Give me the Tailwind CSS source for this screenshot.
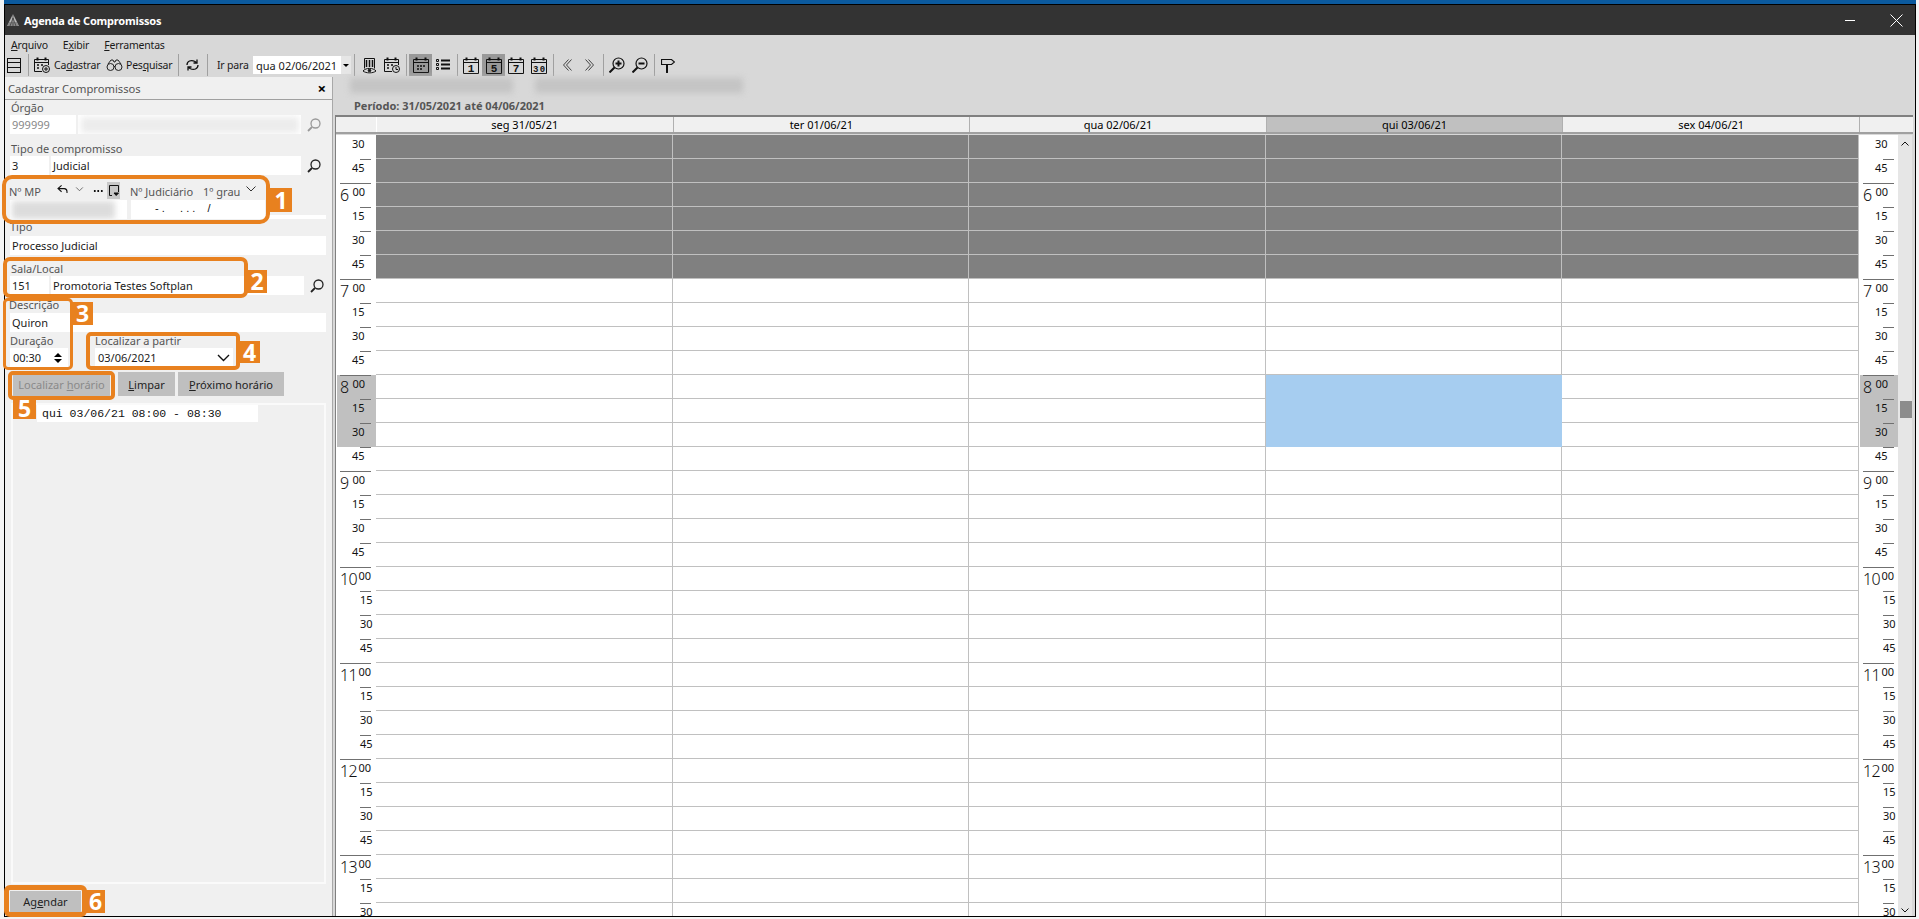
<!doctype html>
<html lang="pt-BR">
<head>
<meta charset="utf-8">
<title>Agenda de Compromissos</title>
<script src="https://cdn.jsdelivr.net/npm/@tailwindcss/browser@4"></script>
</head>
<body class="relative h-[919px] w-[1919px] overflow-hidden bg-[#f4f4f4] font-['Noto_Sans',sans-serif] text-[11px] leading-[15px] text-[#1a1a1a]">
<div class="ml-[4px] mr-[3px] h-[917px] flex flex-col">
  <div class="h-[4px] bg-[#0b5a9e] shrink-0"></div>
  <div class="flex-1 min-h-0 flex flex-col border-x border-b border-black">
    <!-- title -->
    <div class="h-[31px] shrink-0 bg-[#333333] border-t border-black flex items-center text-white">
      <svg class="ml-[1px] w-[14px] h-[14px]" viewBox="0 0 14 14"><path d="M7 1 L13 13 H1Z" fill="#b8b8b8"/><path d="M7 1V13M4 13 7 5M10 13 7 5M2.500 10H11.500M1.500 12H12.500" stroke="#333" stroke-width=".7"/></svg>
      <span class="ml-[4px] text-[11px] tracking-[-0.2px] font-bold">Agenda de Compromissos</span>
      <div class="ml-auto flex items-center">
        <div class="w-[10px] h-[1px] bg-white mr-[35px]"></div>
        <svg class="w-[13px] h-[13px] mr-[12px]" viewBox="0 0 13 13" fill="none" stroke="#fff"><path d="M.5.500 12.500 12.500M12.500.500 .5 12.500"/></svg>
      </div>
    </div>
    <!-- menu -->
    <div class="h-[18px] shrink-0 bg-[#d8d8d8] flex items-center pl-[6px] pt-[3px] text-[10.5px] tracking-[-0.2px]">
      <span><u>A</u>rquivo</span><span class="ml-[15px]">E<u>x</u>ibir</span><span class="ml-[15px]"><u>F</u>erramentas</span>
    </div>
    <!-- toolbar -->
    <div class="h-[24px] shrink-0 bg-[#d8d8d8] flex items-center text-[10.5px] tracking-[-0.2px]">
      <svg class="ml-[2px] w-[14px] h-[15px]" viewBox="0 0 14 15" fill="none" stroke="#111"><rect x=".5" y=".5" width="13" height="14"/><path d="M.5 4.500H13.500M.5 9.500H13.500"/></svg>
      <div class="ml-[7px] w-[1px] h-[22px] bg-[#a0a0a0]"></div>
      <svg class="ml-[5px] w-[16px] h-[16px]" viewBox="0 0 16 16" fill="none" stroke="#111"><path d="M.5 2.500H14.500V8M8 14.500H.5V2.500M.5 5.500H14.500"/><path d="M3.500.5V3.500M11.500.5V3.500" stroke-width="2"/><path d="M3 8H5M3 11H5M7 8H9" stroke-width="1.500"/><circle cx="12" cy="12" r="3.500"/><path d="M12 10V14M10 12H14"/></svg>
      <span class="ml-[4px] w-[45px] whitespace-nowrap">Ca<u>d</u>astrar</span>
      <svg class="ml-[7px] w-[17px] h-[14px]" viewBox="0 0 17 14" fill="none" stroke="#222"><circle cx="4.500" cy="9" r="3.500"/><circle cx="12.500" cy="9" r="3.500"/><path d="M8 8.500 9 8.500M2 6 5 2H7L8 4H9L10 2H12L15 6"/></svg>
      <span class="ml-[3px] w-[46px] whitespace-nowrap">Pes<u>q</u>uisar</span>
      <div class="ml-[6px] w-[1px] h-[22px] bg-[#a0a0a0]"></div>
      <svg class="ml-[7px] w-[13px] h-[14px]" viewBox="0 0 13 14" fill="none" stroke="#111" stroke-width="1.300"><path d="M1 7C1 3 5 1.500 9 3.500L11 5M11 1.500V5H7.500M12 7C12 11 8 12.500 4 10.500L2 9M2 12.500V9H5.500"/></svg>
      <div class="ml-[8px] w-[1px] h-[22px] bg-[#a0a0a0]"></div>
      <span class="ml-[9px] w-[30px] whitespace-nowrap">Ir para</span>
      <div class="ml-[6px] w-[98px] h-[18px] bg-white flex items-center justify-between pl-[3px] text-[11px] tracking-normal"><span>qua 02/06/2021</span><span class="w-[10px] h-full bg-[#e6e6e6] flex items-center justify-center"><span class="border-x-[3px] border-t-[3px] border-x-transparent border-t-black"></span></span></div>
      <div class="ml-[3px] w-[1px] h-[22px] bg-[#a0a0a0]"></div>
      <!-- doc eye -->
      <svg class="ml-[7px] w-[15px] h-[17px]" viewBox="0 0 15 17" fill="none" stroke="#111"><path d="M2.500 11.500V1.500H12.500V11.500"/><path d="M4.500 3V10M7.500 3V10M10.500 3V10" stroke-width="1.500"/><path d="M1 14C4 10.500 11 10.500 14 14C11 16.500 4 16.500 1 14Z"/><circle cx="7.500" cy="13.500" r="1.300" fill="#111"/></svg>
      <!-- cal clock -->
      <svg class="ml-[7px] w-[16px] h-[16px]" viewBox="0 0 16 16" fill="none" stroke="#111"><path d="M.5 2.500H14.500V8M8 14.500H.5V2.500M.5 5.500H14.500"/><path d="M3.500.5V3.500M11.500.5V3.500" stroke-width="2"/><path d="M3 8H5M3 11H5M7 8H9" stroke-width="1.500"/><circle cx="12" cy="12" r="3.500"/><path d="M12 10V12.500H14"/></svg>
      <div class="ml-[6px] w-[1px] h-[22px] bg-[#a0a0a0]"></div>
      <div class="ml-[2px] w-[23px] h-[22px] bg-[#999999] flex items-center justify-center">
        <svg class="w-[16px] h-[16px]" viewBox="0 0 16 16" fill="none" stroke="#111"><path d="M.5 2.500H15.500V15.500H.5Z M.5 5.500H15.500"/><path d="M3.500.5V3.500M12.500.5V3.500" stroke-width="2"/><path d="M4 9H6M7 9H9M10 9H12M4 12H6M7 12H9" stroke-width="1.500"/></svg>
      </div>
      <svg class="ml-[4px] w-[14px] h-[12px]" viewBox="0 0 14 12" fill="none" stroke="#111"><path d="M.5 .5H2.500V2.500H.5ZM.5 4.500H2.500V6.500H.5ZM.5 8.500H2.500V10.500H.5Z"/><path d="M5 1.500H14M5 5.500H14M5 9.500H14" stroke-width="2"/></svg>
      <div class="ml-[7px] w-[1px] h-[22px] bg-[#a0a0a0]"></div>
      <svg class="ml-[5px] w-[16px] h-[17px] overflow-visible" viewBox="0 0 16 17" fill="none" stroke="#111"><path d="M.5 2.500H15.500V16.500H.5Z M.5 5.500H15.500"/><path d="M3.500.5V3.500M12.500.5V3.500" stroke-width="2"/><text x="8" y="15" text-anchor="middle" font-family="Liberation Mono" font-weight="700" font-size="11" fill="#111" stroke="none">1</text></svg>
      <div class="ml-[3px] w-[23px] h-[22px] bg-[#999999] flex items-center justify-center">
        <svg class="w-[16px] h-[17px] overflow-visible" viewBox="0 0 16 17" fill="none" stroke="#111"><path d="M.5 2.500H15.500V16.500H.5Z M.5 5.500H15.500"/><path d="M3.500.5V3.500M12.500.5V3.500" stroke-width="2"/><text x="8" y="15" text-anchor="middle" font-family="Liberation Mono" font-weight="700" font-size="11" fill="#111" stroke="none">5</text></svg>
      </div>
      <svg class="ml-[3px] w-[16px] h-[17px] overflow-visible" viewBox="0 0 16 17" fill="none" stroke="#111"><path d="M.5 2.500H15.500V16.500H.5Z M.5 5.500H15.500"/><path d="M3.500.5V3.500M12.500.5V3.500" stroke-width="2"/><text x="8" y="15" text-anchor="middle" font-family="Liberation Mono" font-weight="700" font-size="11" fill="#111" stroke="none">7</text></svg>
      <svg class="ml-[7px] w-[16px] h-[17px] overflow-visible" viewBox="0 0 16 17" fill="none" stroke="#111"><path d="M.5 2.500H15.500V16.500H.5Z M.5 5.500H15.500"/><path d="M3.500.5V3.500M12.500.5V3.500" stroke-width="2"/><text x="8" y="15" text-anchor="middle" font-family="Liberation Mono" font-weight="700" font-size="9" fill="#111" stroke="none" textLength="12">30</text></svg>
      <div class="ml-[6px] w-[1px] h-[22px] bg-[#a0a0a0]"></div>
      <svg class="ml-[9px] w-[9px] h-[12px]" viewBox="0 0 9 12" fill="none" stroke="#444"><path d="M5.500.5 .5 6 5.500 11.500M8.500.5 3.500 6 8.500 11.500"/></svg>
      <svg class="ml-[13px] w-[9px] h-[12px]" viewBox="0 0 9 12" fill="none" stroke="#444"><path d="M.5.5 5.500 6 .5 11.500M3.500.5 8.500 6 3.500 11.500"/></svg>
      <div class="ml-[9px] w-[1px] h-[22px] bg-[#a0a0a0]"></div>
      <svg class="ml-[5px] w-[16px] h-[16px]" viewBox="0 0 16 16" fill="none" stroke="#111"><circle cx="9.500" cy="6.500" r="5.500" stroke-width="1.200"/><path d="M5.500 10.500 .5 15.500" stroke-width="2"/><path d="M9.500 3.500V9.500M6.500 6.500H12.500" stroke-width="2"/></svg>
      <svg class="ml-[7px] w-[16px] h-[16px]" viewBox="0 0 16 16" fill="none" stroke="#111"><circle cx="9.500" cy="6.500" r="5.500" stroke-width="1.200"/><path d="M5.500 10.500 .5 15.500" stroke-width="2"/><path d="M6.500 6.500H12.500" stroke-width="2"/></svg>
      <div class="ml-[6px] w-[1px] h-[22px] bg-[#a0a0a0]"></div>
      <svg class="ml-[6px] w-[14px] h-[15px]" viewBox="0 0 14 15" fill="none" stroke="#111"><path d="M.5 1.500H10.500L13.500 4 10.500 6.500H.5Z" stroke-width="1.200"/><path d="M6 6.500V15" stroke-width="2"/></svg>
    </div>
    <!-- main -->
    <div class="flex-1 min-h-0 flex bg-[#d8d8d8]">
      <!-- left panel -->
      <aside class="w-[328px] shrink-0 bg-[#f0f0f0] border-r border-[#a8a8a8] flex flex-col text-[#555]">
        <div class="h-[23px] shrink-0 border-b border-[#a0a0a0] flex items-center justify-between px-[3px] pr-[6px] text-[11.2px]"><span>Cadastrar Compromissos</span><span class="font-bold text-black text-[15px]">×</span></div>
        <div class="flex-1 flex flex-col pl-[5px] pr-[6px] text-[11px]">
          <div class="h-[15px] pl-[1px]">Órgão</div>
          <div class="flex h-[19px] items-center">
            <div class="w-[66px] h-full bg-white text-[#888] pl-[2px] flex items-center">999999</div>
            <div class="relative ml-[2px] w-[223px] h-full bg-white overflow-hidden"><div class="absolute left-[3px] right-[2px] top-[2px] bottom-[1px] bg-[#ececec] blur-[3px]"></div></div>
            <svg class="ml-[6px] w-[14px] h-[14px]" viewBox="0 0 14 14" fill="none" stroke="#999" stroke-width="1.300"><circle cx="8.500" cy="5.500" r="4.500"/><path d="M5 9 1 13" stroke-width="1.800"/></svg>
          </div>
          <div class="h-[22px] pl-[1px] pt-[7px] whitespace-nowrap">Tipo de compromisso</div>
          <div class="flex h-[19px] items-center">
            <div class="w-[39px] h-full bg-white text-[#1a1a1a] pl-[2px] flex items-center">3</div>
            <div class="ml-[2px] w-[250px] h-full bg-white text-[#1a1a1a] pl-[2px] flex items-center">Judicial</div>
            <svg class="ml-[6px] w-[14px] h-[14px]" viewBox="0 0 14 14" fill="none" stroke="#222" stroke-width="1.300"><circle cx="8.500" cy="5.500" r="4.500"/><path d="M5 9 1 13" stroke-width="1.800"/></svg>
          </div>
          <div class="h-[25px] flex items-end pb-[1px] relative">
            <span class="-ml-[1px]">Nº MP</span>
            <svg class="absolute left-[47px] top-[10px] w-[11px] h-[9px]" viewBox="0 0 12 10" fill="none" stroke="#111" stroke-width="1.200"><path d="M5 .5 1 4 5 7.500M1 4H8C10 4 11 5.500 11 7.500V9"/></svg>
            <svg class="absolute left-[65px] top-[12px] w-[9px] h-[5px]" viewBox="0 0 9 6" fill="none" stroke="#555"><path d="M.5.5 4.500 4.500 8.500.5"/></svg>
            <span class="absolute left-[83px] top-[15px] w-[10px] h-[2px] bg-[radial-gradient(circle,#111_1px,transparent_1px)] bg-[length:3.500px_2px]"></span>
            <span class="absolute left-[97px] top-[7px] w-[13px] h-[17px] bg-[#c8c8c8] flex items-center justify-center"><svg class="w-[10px] h-[11px]" viewBox="0 0 10 11" fill="none" stroke="#111"><path d="M3 10.500H.5V.5H9.500V7"/><path d="M5 8H9.500L7.200 10.500Z" fill="#111"/></svg></span>
            <span class="absolute left-[120px] bottom-[1px] whitespace-nowrap">Nº Judiciário</span>
            <span class="absolute left-[193px] bottom-[1px] whitespace-nowrap">1º grau</span>
            <svg class="absolute left-[236px] top-[11px] w-[10px] h-[6px]" viewBox="0 0 10 6" fill="none" stroke="#333"><path d="M.5.5 5 5 9.500.5"/></svg>
          </div>
          <div class="flex h-[19px]">
            <div class="relative w-[117px] h-full bg-white overflow-hidden"><div class="absolute left-[2px] right-[12px] top-[1px] bottom-0 bg-[#dcdcdc] blur-[3px]"></div></div>
            <div class="ml-[4px] w-[195px] h-full bg-[#f0f0f0] flex flex-col"><div class="w-[134px] h-[15px] bg-white text-[#111] pl-[24px] pt-[1px] leading-[14px] whitespace-pre font-['Liberation_Sans',sans-serif] text-[11px]">- .     . . .    /</div><div class="h-[4px] bg-white"></div></div>
          </div>
          <div class="h-[17px]">Tipo</div>
          <div class="h-[19px] w-[316px] bg-white text-[#1a1a1a] pl-[2px] flex items-center">Processo Judicial</div>
          <div class="h-[21px] pl-[1px] pt-[6px]">Sala/Local</div>
          <div class="flex h-[19px] items-center">
            <div class="w-[39px] h-full bg-white text-[#1a1a1a] pl-[2px] flex items-center">151</div>
            <div class="ml-[2px] w-[253px] h-full bg-white text-[#1a1a1a] pl-[2px] flex items-center">Promotoria Testes Softplan</div>
            <svg class="ml-[6px] w-[14px] h-[14px]" viewBox="0 0 14 14" fill="none" stroke="#222" stroke-width="1.300"><circle cx="8.500" cy="5.500" r="4.500"/><path d="M5 9 1 13" stroke-width="1.800"/></svg>
          </div>
          <div class="h-[18px] -ml-[1px] pt-[2px]">Descrição</div>
          <div class="h-[19px] w-[316px] bg-white text-[#1a1a1a] pl-[2px] flex items-center">Quiron</div>
          <div class="h-[35px] flex">
            <div class="w-[58px] flex flex-col pt-[1px]">
              <span class="h-[15px]">Duração</span>
              <div class="h-[19px] bg-white text-[#1a1a1a] pl-[3px] flex items-center justify-between pr-[6px]">00:30<span class="flex flex-col gap-[2px]"><span class="border-x-[4px] border-b-[4px] border-x-transparent border-b-black"></span><span class="border-x-[4px] border-t-[4px] border-x-transparent border-t-black"></span></span></div>
            </div>
            <div class="ml-[27px] w-[138px] flex flex-col pt-[1px]">
              <span class="h-[15px]">Localizar a partir</span>
              <div class="h-[19px] bg-white text-[#1a1a1a] pl-[3px] flex items-center justify-between pr-[3px]">03/06/2021<svg class="w-[13px] h-[8px]" viewBox="0 0 13 8" fill="none" stroke="#111" stroke-width="1.400"><path d="M1 1 6.500 6.500 12 1"/></svg></div>
            </div>
          </div>
          <div class="h-[24px] mt-[5px] flex text-center">
            <button class="ml-[3px] w-[97px] bg-[#bfbfbf] text-[#8a8a8a]">Localizar <u>h</u>orário</button>
            <button class="ml-[8px] w-[57px] bg-[#bfbfbf] text-[#222]"><u>L</u>impar</button>
            <button class="ml-[3px] w-[106px] bg-[#bfbfbf] text-[#222]"><u>P</u>róximo horário</button>
          </div>
          <div class="mt-[7px] ml-[1px] w-[315px] h-[481px] border-2 border-[#fafafa] pl-[24px]">
            <div class="w-[221px] h-[17px] bg-white font-['Liberation_Mono',monospace] text-[11.5px] leading-[17px] text-[#111] whitespace-pre pl-[5px]">qui 03/06/21 08:00 - 08:30</div>
          </div>
          <button class="mt-[7px] w-[71px] h-[21px] bg-[#bfbfbf] text-[#222]">Ag<u>e</u>ndar</button>
        </div>
      </aside>
      <!-- right -->
      <section class="flex-1 min-w-0 flex flex-col">
        <div class="h-[20px] shrink-0 relative"><div class="absolute left-[17px] top-[1px] w-[163px] h-[15px] bg-[#c4c4c4] blur-[3px]"></div><div class="absolute left-[202px] top-[1px] w-[208px] h-[15px] bg-[#c4c4c4] blur-[3px]"></div></div>
        <div class="h-[18px] shrink-0 pl-[21px] font-bold text-[#555] text-[11px] pt-[1px]">Período: 31/05/2021 até 04/06/2021</div>
        <div class="flex-1 min-h-0 ml-[2px] mr-[2px] flex flex-col overflow-hidden border-l border-t-2 border-[#808080] text-black">
          <!-- header -->
          <div class="h-[17px] shrink-0 flex border-b-2 border-[#a0a0a0] bg-[#f0f0f0] text-center text-[11px] leading-[15px]">
            <div class="w-[40px] shrink-0"></div>
            <div class="flex-1 border-x border-x-white border-r-[#b0b0b0]">seg 31/05/21</div>
            <div class="flex-1 border-r border-[#b0b0b0]">ter 01/06/21</div>
            <div class="flex-1 border-r border-[#b0b0b0]">qua 02/06/21</div>
            <div class="flex-1 border-r border-[#b0b0b0] bg-[#c0c0c0]">qui 03/06/21</div>
            <div class="flex-1 border-r border-[#b0b0b0]">sex 04/06/21</div>
            <div class="w-[53px] shrink-0"></div>
          </div>
          <!-- body -->
          <div class="flex-1 min-h-0 flex overflow-hidden pt-[1px] bg-[#d8d8d8]">
            <div id="tl" class="w-[40px] shrink-0 bg-white"></div>
            <div id="d0" class="flex-1 min-w-0 bg-white"></div>
            <div id="d1" class="flex-1 min-w-0 bg-white"></div>
            <div id="d2" class="flex-1 min-w-0 bg-white"></div>
            <div id="d3" class="flex-1 min-w-0 bg-white"></div>
            <div id="d4" class="flex-1 min-w-0 bg-white"></div>
            <div id="tr" class="w-[39px] shrink-0 bg-white"></div>
            <div class="w-[14px] shrink-0 bg-[#e6e6e6] flex flex-col items-center relative">
              <svg class="mt-[6px] w-[8px] h-[5px]" viewBox="0 0 8 5" fill="none" stroke="#111"><path d="M.5 4.500 4 1 7.500 4.500"/></svg>
              <div class="absolute left-[2px] top-[266px] w-[12px] h-[17px] bg-[#8c8c8c]"></div>
              <svg class="mt-auto mb-[3px] w-[8px] h-[5px]" viewBox="0 0 8 5" fill="none" stroke="#111"><path d="M.5.5 4 4 7.500.5"/></svg>
            </div>
            <div class="w-[1px] shrink-0"></div>
          </div>
        </div>
      </section>
    </div>
  </div>
</div>

<!-- annotations -->
<div class="absolute left-[292px] top-[215px] w-[34px] h-[4px] bg-white"></div>
<div class="absolute left-[2px] top-[175px] w-[268px] h-[49px] rounded-[10px] border-[4px] border-[#e8811f]"></div>
<div class="absolute left-[3px] top-[257px] w-[245px] h-[41px] rounded-[7px] border-[4px] border-[#e8811f]"></div>
<div class="absolute left-[3px] top-[298px] w-[70px] h-[72px] rounded-[5px] border-[3px] border-[#e8811f]"></div>
<div class="absolute left-[86px] top-[332px] w-[154px] h-[38px] rounded-[5px] border-[4px] border-[#e8811f]"></div>
<div class="absolute left-[8px] top-[371px] w-[107px] h-[29px] rounded-[5px] border-[4px] border-[#e8811f]"></div>
<div class="absolute left-[4px] top-[885px] w-[83px] h-[32px] rounded-[6px] border-[5px] border-[#e8811f]"></div>
<div class="absolute left-[270px] top-[188px] w-[22px] h-[24px] bg-[#e8811f] text-white font-['Open_Sans',sans-serif] font-bold text-[23px] leading-[24px] text-center">1</div>
<div class="absolute left-[247px] top-[270px] w-[20px] h-[23px] bg-[#e8811f] text-white font-['Open_Sans',sans-serif] font-bold text-[23px] leading-[23px] text-center">2</div>
<div class="absolute left-[72px] top-[302px] w-[21px] h-[23px] bg-[#e8811f] text-white font-['Open_Sans',sans-serif] font-bold text-[23px] leading-[23px] text-center">3</div>
<div class="absolute left-[239px] top-[341px] w-[21px] h-[22px] bg-[#e8811f] text-white font-['Open_Sans',sans-serif] font-bold text-[23px] leading-[22px] text-center">4</div>
<div class="absolute left-[13px] top-[398px] w-[23px] h-[21px] bg-[#e8811f] text-white font-['Open_Sans',sans-serif] font-bold text-[23px] leading-[21px] text-center">5</div>
<div class="absolute left-[86px] top-[890px] w-[19px] h-[23px] bg-[#e8811f] text-white font-['Open_Sans',sans-serif] font-bold text-[23px] leading-[23px] text-center">6</div>

<script>
(function(){
  var rows=[];
  var h=5,m=30;
  for(var i=0;i<33;i++){rows.push([h,m]);m+=15;if(m==60){m=0;h++;}}
  function cell(idx,left){
    var r=rows[idx],isH=r[1]==0,mm=r[1]==0?'00':String(r[1]);
    var hi=idx>=10&&idx<13;
    var pad=hi?(isH?'ml-[1px] pl-[3px] ':'ml-[1px] pl-[23px] '):(isH?'pl-[4px] ':'pl-[24px] ');
    var outer='h-[24px] '+(left?'pr-[5px] ':'pr-[4px] ')+pad+(hi?'bg-[#c0c0c0]':'bg-white');
    var line=idx==0?'border-transparent':'border-[#707070]';
    var inner='h-full border-t '+line+' flex text-[11px] leading-[15px] text-[#111]';
    var minute;
    if(isH) minute=r[0]>=10?'ml-auto':'ml-auto mr-[6px]';
    else minute=r[0]>=10?'ml-0':'-ml-[8px]';
    var big=isH?'<span class="text-[16px] leading-[23px] font-light '+(r[0]>=10?'tracking-[-0.6px]':'')+'">'+r[0]+'</span>':'';
    return '<div class="'+outer+'"><div class="'+inner+'">'+big+'<span class="shrink-0 '+minute+'">'+mm+'</span></div></div>';
  }
  var tl='',tr='';for(var i=0;i<33;i++){tl+=cell(i,true);tr+=cell(i,false);}
  document.getElementById('tl').innerHTML=tl;
  document.getElementById('tr').innerHTML=tr;
  for(var d=0;d<5;d++){
    var s='';
    for(var i=0;i<33;i++){
      var c;
      if(i<6) c='bg-[#808080] border-b border-r border-[#c0c0c0]';
      else if(d==3&&i>=10&&i<13) c='bg-[#a6cdf0]';
      else c='bg-white border-b border-r border-[#c0c0c0]';
      s+='<div class="h-[24px] '+c+'"></div>';
    }
    document.getElementById('d'+d).innerHTML=s;
  }
})();
</script>
</body>
</html>
